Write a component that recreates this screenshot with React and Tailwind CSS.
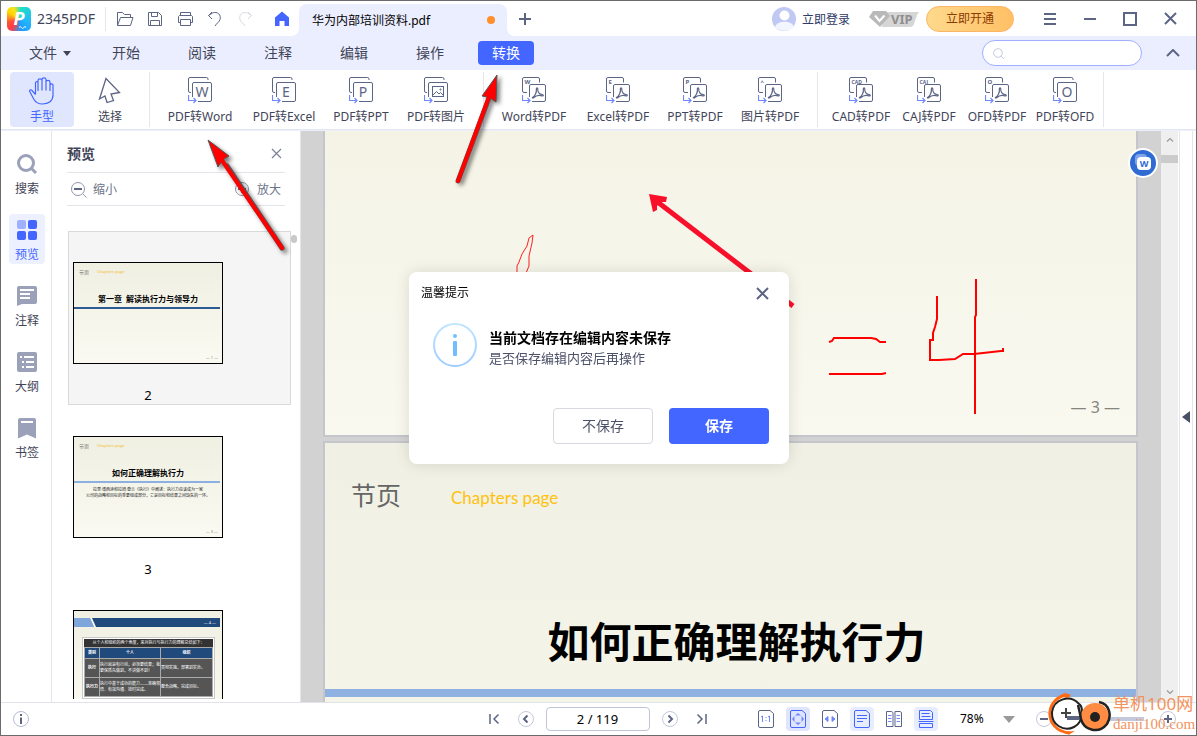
import React from 'react';

const menus = ['开始', '阅读', '注释', '编辑', '操作'];

const toolGroups = [
    [
        { label: 'PDF转Word', letter: 'W', width: 'w-[84px]' },
        { label: 'PDF转Excel', letter: 'E', width: 'w-[84px]' },
        { label: 'PDF转PPT', letter: 'P', width: 'w-[70px]' },
        { label: 'PDF转图片', picture: true, width: 'w-[80px]' },
    ],
    [
        { label: 'Word转PDF', badge: 'W', width: 'w-[84px]' },
        { label: 'Excel转PDF', badge: 'E', width: 'w-[84px]' },
        { label: 'PPT转PDF', badge: 'P', width: 'w-[70px]' },
        { label: '图片转PDF', badge: '^', width: 'w-[80px]' },
    ],
    [
        { label: 'CAD转PDF', badge: 'CAD', width: 'w-[68px]' },
        { label: 'CAJ转PDF', badge: 'CAJ', width: 'w-[68px]' },
        { label: 'OFD转PDF', badge: 'O', width: 'w-[68px]' },
        { label: 'PDF转OFD', letter: 'O', width: 'w-[68px]' },
    ],
];

const Svg = ({ w, h, className = '', children }) => (
    <svg width={w} height={h} viewBox={`0 0 ${w} ${h}`} fill="none" stroke="currentColor" className={`shrink-0 ${className}`} aria-hidden="true">
        {children}
    </svg>
);

const Cross = ({ size, stroke }) => (
    <Svg w={size} h={size}>
        <path d={`M1 1L${size - 1} ${size - 1}M${size - 1} 1L1 ${size - 1}`} strokeWidth={stroke} />
    </Svg>
);

/* Two stacked sheets with the blue "convert" arrow */
const ConvertIcon = ({ letter, badge, picture }) => (
    <Svg w={25} h={28} className="text-[#5d6585]">
        {badge ? (
            <>
                <path d="M5 15.5H2a1.5 1.5 0 0 1-1.500-1.500V2A1.500 1.500 0 0 1 2 .5h14A1.500 1.500 0 0 1 17.500 2v3.500" />
                <path d="M10 24.500h12a1.500 1.500 0 0 0 1.500-1.500V9A1.500 1.500 0 0 0 22 7.500H9A1.500 1.500 0 0 0 7.500 9v11" />
                <path d="M10.500 20.500c2.500-1.200 4.300-5 3.900-8.700-.1-1.300 1.400-1.300 1.300 0-.2 3.200 1.700 5.700 4.600 5.700 1.400.1 1.300 1.700 0 1.400-3-1-6.800 0-8.700 1.800-.6.600-1.600.3-1.100-.2z" strokeWidth="1.200" />
                <text x="2.500" y="6.500" fontSize={badge.length > 1 ? 5 : 6} fontWeight="700" fill="currentColor" stroke="none">{badge}</text>
            </>
        ) : (
            <>
                <path d="M3 15.500H2A1.500 1.500 0 0 1 .5 14V2A1.500 1.500 0 0 1 2 .5h16.500A1.500 1.500 0 0 1 20 2v1" />
                <path d="M10 24.500h12a1.500 1.500 0 0 0 1.500-1.500V7A1.500 1.500 0 0 0 22 5.500H6A1.500 1.500 0 0 0 4.500 7v13" />
                {picture ? (
                    <>
                        <rect x="8.500" y="9.500" width="11" height="10" />
                        <path d="M9 18l3.500-3.500 2.500 2.500 1.500-1.500 3 3" />
                        <circle cx="16.500" cy="12.500" r=".6" />
                    </>
                ) : (
                    <text x="14" y="20" fontSize="14" textAnchor="middle" fill="currentColor" stroke="none">{letter}</text>
                )}
            </>
        )}
        <path d="M.5 18v5.500h7M5.500 21l2.500 2.500L5.500 26" className="text-[#6f87ff]" strokeWidth="1.200" />
    </Svg>
);

const ToolButton = ({ label, width, active, children }) => (
    <button className={`${width} h-[55px] shrink-0 pt-[5px] rounded flex flex-col items-center text-xs leading-4 ${active ? 'bg-[#e1e6ff] text-[#4266ff]' : 'text-[#3f4558]'}`}>
        <span className="h-8 flex items-start justify-center">{children}</span>
        {label}
    </button>
);

const Divider = ({ className = '' }) => <span className={`w-px h-[55px] shrink-0 bg-[#e6e7ec] ${className}`}></span>;

const TitleBar = () => (
    <header className="h-[35px] shrink-0 flex items-center bg-white pl-1.5 pr-1.5 text-[#5d6585]">
        <span className="relative w-6 h-6 rounded-[5px] flex justify-center bg-[conic-gradient(from_10deg,#1fe0c4,#22b4ff_28%,#1d9bff_45%,#ff3b45_58%,#ff5533_68%,#ffd800_82%,#f7e21a_90%,#1fe0c4)]">
            <span className="text-white font-bold italic text-lg leading-[22px]">P</span>
            <svg width="24" height="24" viewBox="0 0 24 24" fill="none" stroke="#fff" className="absolute inset-0" aria-hidden="true">
                <path d="M12 20.500q1.200-2 2.400 0t2.400 0 2.400 0" />
            </svg>
        </span>
        <span className="w-[68px] ml-1.5 text-sm text-[#3f4558]">2345PDF</span>
        <span className="w-px h-6 bg-[#e6e7ec] mr-1"></span>
        <button className="w-[30px] flex justify-center" aria-label="打开">
            <Svg w={18} h={16}>
                <path d="M1.500 14.500v-13h5l2 2h6v3M1.500 14.500l3-8h12.500l-2.500 8z" strokeLinejoin="round" />
            </Svg>
        </button>
        <button className="w-[30px] flex justify-center" aria-label="保存文档">
            <Svg w={16} h={16}>
                <path d="M1.500 1.500h10l3 3v10h-13zM4.500 1.500v4h6v-4M3.500 14.500v-5h9v5" strokeLinejoin="round" />
            </Svg>
        </button>
        <button className="w-[30px] flex justify-center" aria-label="打印">
            <Svg w={17} h={16}>
                <path d="M3.500 4.500v-3h10v3M3.500 11.500h-2v-6l1-1h12l1 1v6h-2M3.500 8.500h10v6h-10z" strokeLinejoin="round" />
            </Svg>
        </button>
        <button className="w-[30px] flex justify-center" aria-label="撤销">
            <Svg w={16} h={16}>
                <path d="M5 1L1.500 4.500 5 8M1.500 4.500l4-2.500c5-2 9 2 7.500 6.500-.8 2.500-3.500 4-5 6.500" />
            </Svg>
        </button>
        <button className="w-[30px] flex justify-center text-[#d8dae2]" aria-label="重做">
            <Svg w={16} h={16}>
                <path d="M11 1l3.500 3.500L11 8M14.500 4.500l-4-2.500c-5-2-9 2-7.500 6.500.8 2.500 3.500 4 5 6.500" />
            </Svg>
        </button>
        <button className="w-7 ml-2 flex justify-center text-[#4266ff]" aria-label="主页">
            <Svg w={16} h={16}>
                <path d="M8 .5L1 6.500v8.500h4.500v-5h5v5H15V6.500z" fill="currentColor" stroke="none" />
            </Svg>
        </button>
        <div className="relative self-end ml-[3px] w-52 h-8 rounded-t-lg bg-[#ebeeff] flex items-center justify-between pl-[13px] pr-3 text-xs text-black before:absolute before:w-2 before:h-2 before:bottom-0 before:-left-2 before:bg-[radial-gradient(circle_at_0_0,transparent_8px,#ebeeff_8px)] after:absolute after:w-2 after:h-2 after:bottom-0 after:-right-2 after:bg-[radial-gradient(circle_at_100%_0,transparent_8px,#ebeeff_8px)]">
            <span className="pt-0.5">华为内部培训资料.pdf</span>
            <span className="w-2 h-2 rounded-full bg-[#ff8f2b]"></span>
        </div>
        <button className="w-9 flex justify-center" aria-label="新建标签">
            <Svg w={12} h={12}>
                <path d="M6 0v12M0 6h12" strokeWidth="2" />
            </Svg>
        </button>

        <button className="ml-auto flex items-center text-xs text-[#2f3a66]">
            <Svg w={24} h={24} className="mr-1.5">
                <circle cx="12" cy="12" r="12" fill="#c0c8f4" stroke="none" />
                <circle cx="12.500" cy="8.500" r="5" fill="#fff" stroke="none" />
                <path d="M3 20c2-7 17-7 19 0-4 5-14 5-19 0z" fill="#f3f5ff" stroke="none" />
            </Svg>
            <span className="pt-0.5">立即登录</span>
        </button>
        <span className="relative w-[50px] h-4 ml-[19px]">
            <svg width="50" height="16" viewBox="0 0 50 16" aria-hidden="true">
                <path d="M15 1h35l-2 3-3 9q-1 3-4 3H13z" fill="#d6d6d6" />
                <path d="M4 0h13l4 5-10 11L0 6z" fill="#b9b9b9" />
                <path d="M6 4.500l4.500 5.500 5-5.500" fill="none" stroke="#fff" strokeWidth="2" />
            </svg>
            <b className="absolute left-[22px] top-0 text-[13px] leading-4 text-[#8f8f8f]">VIP</b>
        </span>
        <button className="w-[88px] h-[26px] ml-[7px] mr-4 rounded-full border border-[#fcb562] bg-gradient-to-r from-[#ffd98c] to-[#ffc065] text-xs text-[#8b3a00]">立即开通</button>
        <button className="w-10 flex justify-center" aria-label="菜单">
            <Svg w={12} h={12}>
                <path d="M0 1h12M0 6h12M0 11h12" strokeWidth="2" />
            </Svg>
        </button>
        <button className="w-10 flex justify-center" aria-label="最小化">
            <Svg w={12} h={12}>
                <path d="M0 6h12" strokeWidth="2" />
            </Svg>
        </button>
        <button className="w-10 flex justify-center" aria-label="最大化">
            <Svg w={14} h={14}>
                <rect x="1" y="1" width="12" height="12" strokeWidth="2" />
            </Svg>
        </button>
        <button className="w-10 flex justify-center" aria-label="关闭">
            <Cross size={13} stroke={2} />
        </button>
    </header>
);

const MenuBar = () => (
    <nav className="h-[34px] shrink-0 bg-[#ebeeff] flex items-center gap-5 pl-[21px] pr-4 text-sm text-[#3f4558]">
        <button className="w-14 flex items-center justify-center gap-1.5">
            文件
            <Svg w={8} h={5}>
                <path d="M0 0h8L4 5z" fill="currentColor" stroke="none" />
            </Svg>
        </button>
        {menus.map((name) => (
            <button key={name} className="w-14">{name}</button>
        ))}
        <button className="w-14 h-6 rounded bg-[#4266ff] text-white leading-6">转换</button>
        <label className="ml-auto w-40 h-[26px] rounded-full border border-[#9fafff] bg-white flex items-center px-2.5 text-[#c3cbe0]">
            <Svg w={11} h={11}>
                <circle cx="5" cy="5" r="4.300" />
                <path d="M8 8l3 3" />
            </Svg>
            <input type="text" aria-label="搜索功能" className="w-full min-w-0 ml-1 outline-none bg-transparent text-xs text-[#3f4558]" />
        </label>
        <button className="w-[18px] flex justify-end text-[#5d6585]" aria-label="收起工具栏">
            <Svg w={14} h={8}>
                <path d="M1 7l6-6 6 6" strokeWidth="2" />
            </Svg>
        </button>
    </nav>
);

const ToolBar = () => (
    <div className="h-[60px] shrink-0 bg-white border-b border-[#e3e5ef] flex items-start pt-0.5 pl-[9px] overflow-hidden">
        <ToolButton label="手型" width="w-16" active>
            <Svg w={26} h={28}>
                <path d="M6.500 17.500L3 13.500c-1.500-1.800-3 0-2 1.500l4 7.500c2 3.500 5 4.500 8.500 4.500 6 0 10.500-3 10.500-9V8.500c0-2.200-3-2.200-3 0V14M21 9V5c0-2.200-4-2.200-4 0v8.500M17 5V2.500c0-2.200-4-2.200-4 0v11M13 3.500c0-2.200-4-2.200-4 0V14M9 5c-1.500-1-2.800 0-2.500 2v10.500" strokeWidth="1.200" />
            </Svg>
        </ToolButton>
        <ToolButton label="选择" width="w-16 ml-1">
            <Svg w={24} h={28} className="text-[#5d6585]">
                <path d="M8 1.500L1.500 22l5.500-3 2 6.500 6.500-2-2.500-6.500 8.500-1.500z" strokeWidth="1.300" />
            </Svg>
        </ToolButton>
        <Divider className="ml-[7px] mr-2" />
        {toolGroups.map((group, i) => (
            <React.Fragment key={i}>
                {i > 0 && <Divider className={i === 1 ? 'ml-[7px] mr-2' : 'ml-[7px] mr-[9px]'} />}
                {group.map((tool) => (
                    <ToolButton key={tool.label} label={tool.label} width={tool.width}>
                        <ConvertIcon {...tool} />
                    </ToolButton>
                ))}
            </React.Fragment>
        ))}
        <Divider className="ml-1" />
    </div>
);

const railItems = [
    {
        label: '搜索',
        icon: (
            <>
                <circle cx="9" cy="9" r="7.500" strokeWidth="3" />
                <path d="M14 14l5 5" strokeWidth="3" />
            </>
        ),
    },
    {
        label: '预览',
        active: true,
        icon: (
            <g stroke="none" fill="#4266ff">
                <rect width="9" height="9" rx="2" fill="#9fb0ff" />
                <rect x="11" width="9" height="9" rx="2" />
                <rect y="11" width="9" height="9" rx="2" />
                <rect x="11" y="11" width="9" height="9" rx="2" />
            </g>
        ),
    },
    {
        label: '注释',
        icon: (
            <>
                <path d="M2 0h16q2 0 2 2v14q0 2-2 2H5l-5 2V2q0-2 2-2z" fill="currentColor" stroke="none" />
                <path d="M3 4h14M3 8h10M3 12h10" stroke="#fff" strokeWidth="2" />
            </>
        ),
    },
    {
        label: '大纲',
        icon: (
            <>
                <rect width="20" height="20" rx="2" fill="currentColor" stroke="none" />
                <path d="M3 5h2M7 5h10M5 10h2M9 10h8M5 15h2M9 15h8" stroke="#fff" strokeWidth="2" />
            </>
        ),
    },
    {
        label: '书签',
        icon: (
            <>
                <path d="M3 0h14q2 0 2 2v18.500l-9-4-9 4V2q0-2 2-2z" fill="currentColor" stroke="none" />
                <path d="M4 4h12" stroke="#fff" strokeWidth="2" />
            </>
        ),
    },
];

const SideRail = () => (
    <aside className="w-[51px] shrink-0 bg-white border-r border-[#e4e5ea] pt-[17px] pl-0.5 flex flex-col items-center gap-4">
        {railItems.map((item) => (
            <button key={item.label} className={`w-9 h-[50px] pt-1.5 rounded flex flex-col items-center gap-[7px] text-xs leading-4 ${item.active ? 'bg-[#edf0ff] text-[#4266ff]' : 'text-[#3f4558]'}`}>
                <Svg w={20} h={20} className={item.active ? '' : 'text-[#9aa1b8] overflow-visible'}>{item.icon}</Svg>
                {item.label}
            </button>
        ))}
    </aside>
);

const Thumb = ({ number, selected, children }) => (
    <li className={`h-[174px] shrink-0 pl-1 pt-[30px] border ${selected ? 'bg-[#f5f5f5] border-[#d9d9d9]' : 'border-transparent'}`}>
        <div className="w-[150px] h-[102px] border border-black bg-gradient-to-b from-[#efefe2] to-[#fafaf2] overflow-hidden">{children}</div>
        {number && <p className="w-[150px] pt-[21px] text-center text-[13px] leading-5 text-black">{number}</p>}
    </li>
);

const ThumbHead = () => (
    <div className="pl-[5px] pt-1.5 flex items-center gap-2 leading-[6px]">
        <span className="text-[5px] text-[#666]">节页</span>
        <span className="text-[4px] text-[#f5bb2b]">Chapters page</span>
    </div>
);

const PreviewPanel = () => (
    <section className="w-[249px] shrink-0 bg-white border-r border-[#e4e5ea] pb-[3px] flex flex-col text-[#3f4558]">
        <div className="mx-[15px]">
            <div className="h-[42px] pt-1 pr-[3px] flex items-center justify-between border-b border-[#e4e5ea]">
                <h2 className="text-sm font-bold">预览</h2>
                <button className="text-[#7b8298]" aria-label="关闭预览">
                    <Cross size={11} stroke={1.200} />
                </button>
            </div>
            <div className="h-[33px] pl-1 pr-1 pt-0.5 flex items-center justify-between border-b border-[#e4e5ea] text-xs text-[#6d7389]">
                <button className="flex items-center gap-1.5">
                    <Svg w={16} h={16} className="text-[#8f96aa]">
                        <circle cx="7" cy="7" r="6.500" />
                        <path d="M12 12l3.500 3.500" />
                        <path d="M3 7h8" stroke="#5d6585" strokeWidth="2" />
                    </Svg>
                    缩小
                </button>
                <button className="flex items-center gap-1.5">
                    <Svg w={16} h={16} className="text-[#8f96aa]">
                        <circle cx="7" cy="7" r="6.500" />
                        <path d="M12 12l3.500 3.500" />
                        <path d="M3 7h8M7 3v8" stroke="#5d6585" strokeWidth="2" />
                    </Svg>
                    放大
                </button>
            </div>
        </div>
        <div className="flex-1 min-h-0 mt-[25px] pl-4 flex">
            <ul className="w-[223px] overflow-hidden flex flex-col">
                <Thumb number="2" selected>
                    <ThumbHead />
                    <h3 className="pt-[17px] h-8 text-center text-[8px] leading-[14px] font-bold text-black whitespace-pre">第一章  解读执行力与领导力</h3>
                    <div className="mr-0.5 h-0.5 bg-[#2f5a93]"></div>
                    <p className="pt-[46px] pr-1 text-right text-[4px] leading-[6px] text-[#888]">— 1 —</p>
                </Thumb>
                <Thumb number="3">
                    <ThumbHead />
                    <h3 className="pt-[17px] h-8 text-center text-[8px] leading-[14px] font-bold text-black">如何正确理解执行力</h3>
                    <div className="mr-0.5 h-0.5 bg-[#8db0e2]"></div>
                    <p className="pt-1 text-center text-[4px] leading-[6px] text-[#222]">
                        拉里·博西迪和拉姆·查兰《执行》中阐述：执行力应该成为一家
                        <br />
                        公司的战略和目标的重要组成部分，它是目标和结果之间缺失的一环。
                    </p>
                    <p className="pt-[30px] pr-1 text-right text-[4px] leading-[6px] text-[#888]">— 3 —</p>
                </Thumb>
                <Thumb>
                    <div className="mt-[7px] mr-0.5 h-[9px] flex bg-[#20497c]">
                        <svg width="22" height="9" viewBox="0 0 22 9" aria-hidden="true">
                            <path d="M0 0h16l4 9H0z" fill="#7fa6da" />
                            <path d="M16 0h2l4 9h-2z" fill="#fff" />
                        </svg>
                        <span className="ml-auto pr-1 text-[4px] leading-[9px] text-white">— 4 —</span>
                    </div>
                    <div className="mt-2.5 ml-2 mr-[7px] p-px border border-[#c9c9c9] bg-white">
                        <table className="w-full table-fixed bg-[#555] text-[4px] leading-[6px] text-white">
                            <caption className="h-2 bg-[#333] text-[4px] leading-[8px] text-white">从个人和组织的两个角度，来对执行与执行力的理解总结如下：</caption>
                            <thead>
                                <tr className="h-[11px] bg-[#20497c]">
                                    <th className="w-[15px] border border-[#aaa]">类别</th>
                                    <th className="border border-[#aaa]">个人</th>
                                    <th className="w-[52px] border border-[#aaa]">组织</th>
                                </tr>
                            </thead>
                            <tbody>
                                <tr className="h-[19px]">
                                    <th className="border border-[#aaa]">执行</th>
                                    <td className="border border-[#aaa]">执行就是有行动，必须要结果；我要保质先做到，不讲做不到！</td>
                                    <td className="border border-[#aaa]">贯彻实施，部署到实处。</td>
                                </tr>
                                <tr className="h-[19px]">
                                    <th className="border border-[#aaa]">执行力</th>
                                    <td className="border border-[#aaa]">执行中基于成功的能力——准确领悟、有效沟通、按时完成。</td>
                                    <td className="border border-[#aaa]">整合战略，完成目标。</td>
                                </tr>
                            </tbody>
                        </table>
                    </div>
                </Thumb>
            </ul>
            <span className="w-1.5 h-2 mt-1 rounded-full bg-[#c9c9c9]"></span>
        </div>
    </section>
);

/* Freehand red marks drawn by the user on page 3 */
const PageMarks = () => (
    <svg width="813" height="304" viewBox="0 0 813 304" fill="none" className="absolute left-0 top-0" aria-hidden="true">
        <path d="M192 142v-7l2-4 3-8 5-8 2-8 4-3-1 8-3 13v10l-3 7" stroke="#ff2020" />
        <path d="M330 69l138 106" stroke="#f8102a" strokeWidth="5" />
        <path d="M324 63l18 3-1 5-6 0-3 4 0 4-4 2z" fill="#f8102a" />
        <g stroke="#ff0000" strokeWidth="2">
            <path d="M504 211l3-1 2-3h37l5 1 4 3h6M504 243h53l4-1" />
            <path d="M612 165v23l-2 8-2 6v7h-3v20h9l16-1 8-5h11l27-3h2v-3" />
            <path d="M651 148v36l-1 2v97" />
        </g>
    </svg>
);

const Document = () => (
    <main className="relative flex-1 min-w-0 bg-[#d2d2d2] pl-[22px] pr-[23px] flex flex-col gap-1 overflow-hidden">
        <article className="relative h-[306px] shrink-0 border-2 border-t-0 border-[#c5c6cb] bg-gradient-to-b from-[#f4f3e6] to-[#faf9f0] overflow-hidden flex flex-col justify-end items-end">
            <PageMarks />
            <p className="pr-4 pb-4 text-base leading-6 text-[#85857d]">— 3 —</p>
        </article>
        <article className="flex-1 min-h-0 border-2 border-b-0 border-[#c5c6cb] bg-gradient-to-b from-[#f0f0e4] to-[#f4f4e8] overflow-hidden">
            <div className="pl-[26px] pt-[31px] flex items-center gap-[50px] leading-9">
                <span className="text-[25px] text-[#666]">节页</span>
                <span className="pt-1.5 font-['Lato'] text-[17px] text-[#ffc20e]">Chapters page</span>
            </div>
            <h1 className="pt-24 pl-3 text-center text-[42px] leading-[60px] font-bold text-black">如何正确理解执行力</h1>
            <div className="mt-[17px] h-2 bg-[#8fb1e2]"></div>
        </article>
        <button className="absolute right-[3px] top-[17px] w-[30px] h-[30px] rounded-full border-2 border-white bg-[#2f6bd3] flex items-center justify-center" aria-label="转Word">
            <Svg w={18} h={18}>
                <rect x="1" y="0" width="12" height="12" rx="4" fill="#7fa4ea" stroke="none" />
                <rect x="3" y="3" width="14" height="13" rx="4" fill="#fff" stroke="none" />
                <text x="10" y="13" fontSize="9" fontWeight="700" textAnchor="middle" fill="#2f6bd3" stroke="none">W</text>
            </Svg>
        </button>
    </main>
);

const ScrollBar = () => (
    <div className="w-[17px] shrink-0 bg-[#efefef] flex flex-col items-center text-[#9a9a9a]">
        <span className="h-6 pt-1.5">
            <Svg w={8} h={5}>
                <path d="M1 4.500l3-3 3 3" strokeWidth="1.200" />
            </Svg>
        </span>
        <span className="w-full h-2 bg-[#cbcbcb]"></span>
        <span className="mt-auto h-5 flex items-center">
            <Svg w={8} h={5}>
                <path d="M1 .5l3 3 3-3" strokeWidth="1.200" />
            </Svg>
        </span>
    </div>
);

const SideHandle = () => (
    <div className="w-[18px] shrink-0 bg-white flex">
        <button className="ml-px w-3.5 border-l border-r border-[#e4e5ea] flex items-center justify-center" aria-label="展开侧栏">
            <Svg w={8} h={12} className="text-[#4a5068]">
                <path d="M8 0v12L0 6z" fill="currentColor" stroke="none" />
            </Svg>
        </button>
    </div>
);

const viewModes = [
    { label: '实际大小', art: <path d="M4.500 6v6M3 7l1.500-1M11.500 6v6M10 7l1.500-1M8 7v1M8 10v1" className="text-[#6f87ff]" /> },
    { label: '适合页面', on: 'bg-[#dfe4ff]', art: <path d="M8 3l3 2.500H5zM8 15l3-2.500H5zM2 9l2.500-3v6zM14 9l-2.500-3v6z" fill="#6f87ff" stroke="none" /> },
    { label: '适合宽度', art: <path d="M3 9l3-2.500v5zM13 9l-3-2.500v5z" fill="#6f87ff" className="text-[#6f87ff]" /> },
    { label: '单页', on: 'bg-[#e8ecff]', art: <path d="M3 5.500h10M3 8.500h10M3 11.500h6" /> },
    { label: '双页', twin: true },
    { label: '连续', on: 'bg-[#e8ecff]', split: true },
];

const ViewButton = ({ mode }) => (
    <button className={`w-6 h-6 rounded flex items-center justify-center ${mode.on ? mode.on + ' text-[#4266ff]' : 'text-[#5d6585]'}`} aria-label={mode.label}>
        <Svg w={16} h={18}>
            {mode.twin && (
                <>
                    <path d="M.5 1.500h5l1.500 1v14H.5zM15.500 2.500v14H9v-15h5z" />
                    <path d="M2 5.500h3.500M2 8.500h3.500M2 11.500h3.500M10.500 5.500H14M10.500 8.500H14M10.500 11.500H14" className="text-[#6f87ff]" />
                </>
            )}
            {mode.split && <path d="M1.500.5h11l2 2v7h-13zM3.500 3.500h8M3.500 6.500h9M.5 11.500h15M1.500 13.500h13v4h-13z" />}
            {!mode.twin && !mode.split && <path d="M2 .5h10l3.500 3v12.500a1.500 1.500 0 0 1-1.500 1.500H2A1.500 1.500 0 0 1 .5 16V2A1.500 1.500 0 0 1 2 .5z" />}
            {mode.art}
        </Svg>
    </button>
);

const RoundButton = ({ label, d }) => (
    <button aria-label={label}>
        <Svg w={16} h={16}>
            <circle cx="8" cy="8" r="7.500" stroke="#c3c8dc" fill="#fff" />
            <path d={d} strokeWidth="2" />
        </Svg>
    </button>
);

const StatusBar = () => (
    <footer className="h-[33px] shrink-0 bg-white border-t border-[#e2e3e8] grid grid-cols-[1fr_auto_1fr] items-center text-[#5d6585]">
        <button className="pl-3 justify-self-start" aria-label="文档信息">
            <Svg w={16} h={16}>
                <circle cx="8" cy="8" r="7.500" stroke="#b4bbd6" />
                <path d="M8 3v2M8 6.500V13" strokeWidth="2" />
            </Svg>
        </button>
        <div className="flex items-center pr-0.5">
            <button aria-label="首页">
                <Svg w={11} h={12}>
                    <path d="M1 1v10M9.500 1.500L5 6l4.500 4.500" strokeWidth="1.500" />
                </Svg>
            </button>
            <span className="ml-[18px] mr-3 flex"><RoundButton label="上一页" d="M9.500 4.500L6 8l3.500 3.500" /></span>
            <input type="text" defaultValue="2 / 119" aria-label="页码" className="w-[104px] h-6 rounded-sm border border-[#bfc4d8] text-center text-[13px] text-black" />
            <span className="ml-3 mr-[18px] flex"><RoundButton label="下一页" d="M6.500 4.500L10 8l-3.500 3.500" /></span>
            <button aria-label="末页">
                <Svg w={11} h={12}>
                    <path d="M10 1v10M1.500 1.500L6 6l-4.500 4.500" strokeWidth="1.500" />
                </Svg>
            </button>
        </div>
        <div className="justify-self-end pr-5 flex items-center">
            <div className="flex gap-2">
                {viewModes.map((mode) => <ViewButton key={mode.label} mode={mode} />)}
            </div>
            <button className="ml-[22px] w-[55px] mr-[21px] flex items-center justify-between text-xs text-black">
                78%
                <Svg w={12} h={7} className="text-[#9a9a9a]">
                    <path d="M0 0h12L6 7z" fill="currentColor" stroke="none" />
                </Svg>
            </button>
            <RoundButton label="缩小页面" d="M4 8h8" />
            <span className="w-[108px] flex items-center">
                <span className="ml-3 w-10 h-1 bg-[#5d6585]"></span>
                <span className="w-10 h-1 bg-[#c3c8dc]"></span>
            </span>
            <RoundButton label="放大页面" d="M4 8h8M8 4v8" />
        </div>
    </footer>
);

const SaveDialog = () => (
    <div className="fixed inset-0 flex items-center justify-center pointer-events-none">
        <div role="dialog" aria-labelledby="save-title" className="pointer-events-auto ml-px w-[380px] h-48 rounded-lg bg-white shadow-[0_0_16px_rgba(0,0,0,0.12)] pl-3 pr-5 pb-5 flex flex-col">
            <div className="h-[42px] flex items-center justify-between">
                <h2 id="save-title" className="text-xs text-black">温馨提示</h2>
                <button className="text-[#5d6585]" aria-label="关闭">
                    <Cross size={13} stroke={2} />
                </button>
            </div>
            <div className="pl-3 pt-[9px] flex gap-3">
                <svg width="44" height="44" viewBox="0 0 44 44" fill="none" aria-hidden="true">
                    <defs>
                        <linearGradient id="info" x1="0" y1="0" x2="0" y2="44" gradientUnits="userSpaceOnUse">
                            <stop stopColor="#c2e6ff" />
                            <stop offset="1" stopColor="#9ccbff" />
                        </linearGradient>
                    </defs>
                    <circle cx="22" cy="22" r="21" stroke="url(#info)" strokeWidth="2" />
                    <circle cx="22" cy="13" r="2" fill="#72c1ff" />
                    <rect x="20" y="18" width="4" height="15" rx="1" fill="#72bcff" />
                </svg>
                <div className="pt-[5px]">
                    <p className="text-sm leading-5 font-bold text-black">当前文档存在编辑内容未保存</p>
                    <p className="text-[13px] leading-5 text-[#4b5168]">是否保存编辑内容后再操作</p>
                </div>
            </div>
            <div className="mt-auto flex justify-end gap-4 text-sm">
                <button className="w-[100px] h-9 rounded border border-[#d7d9e0] text-[#4b5168]">不保存</button>
                <button className="w-[100px] h-9 rounded bg-[#4266ff] font-bold text-white">保存</button>
            </div>
        </div>
    </div>
);

/* Red pointers laid over the window */
const Pointers = () => (
    <>
        <svg width="100" height="130" viewBox="0 0 100 130" className="absolute left-[199px] top-[132px] pointer-events-none drop-shadow-[3px_3px_2px_rgba(0,0,0,0.5)]" aria-hidden="true">
            <path d="M27 33L82 115" stroke="#555" strokeWidth="5" strokeLinecap="round" />
            <path d="M8 7l21 16-5 3-2 2-4 6z" fill="#ff0000" stroke="#555" />
            <path d="M19 23L82 115" stroke="#ff0000" strokeWidth="4" strokeLinecap="round" />
        </svg>
        <svg width="70" height="125" viewBox="0 0 70 125" className="absolute left-[446px] top-[67px] pointer-events-none drop-shadow-[3px_2px_2px_rgba(0,0,0,0.5)]" aria-hidden="true">
            <path d="M42 30L11 113" stroke="#555" strokeWidth="5" strokeLinecap="round" />
            <path d="M50 7l-15 21 5 1 3 1 6 4z" fill="#ff0000" stroke="#555" />
            <path d="M43 26L11 113" stroke="#ff0000" strokeWidth="4" strokeLinecap="round" />
        </svg>
    </>
);

const SiteMark = () => (
    <div className="absolute right-0 bottom-0 flex items-center gap-px pointer-events-none text-[#f3925c]">
        <svg width="64" height="42" viewBox="0 0 64 42" fill="none" aria-hidden="true">
            <path d="M22 3c-8-3-19 5-20 16-1 10 6 20 20 21" stroke="#ff6a13" strokeWidth="3" />
            <path d="M12 3q5-5 9-1l-2 3zM22 41q-5 1-6-2l11-1z" fill="#ff6a13" />
            <circle cx="18" cy="21" r="15" fill="#fff" />
            <path d="M31 11C22 1 6 6 4 19c-1 13 12 20 22 15 6-3 8-9 8-15 0-5-1-7-3-8" stroke="#222" strokeWidth="2" />
            <path d="M13 20h10M18 15v10" stroke="#444" strokeWidth="2" />
            <path d="M19 25h14" stroke="#5d6585" strokeWidth="4" />
            <circle cx="47" cy="24" r="14" fill="#ff8c42" />
            <path d="M30 12q2 8 3 14c3 12 18 15 26 5 5-8 3-20-8-22" stroke="#222" strokeWidth="2.500" />
            <circle cx="47" cy="24" r="5" fill="#222" />
        </svg>
        <p className="w-[83px]">
            <span className="block text-[17px] leading-5">单机100网</span>
            <span className="block font-['Liberation_Serif'] text-[15px] leading-5">danji100.com</span>
        </p>
    </div>
);

const App = () => {
    return (
        <div className="relative h-screen min-h-[480px] overflow-hidden flex flex-col border border-[#6b6b6b] bg-[#edf0fc] font-['Noto_Sans','Noto_Sans_CJK_SC',sans-serif]">
            <TitleBar />
            <MenuBar />
            <ToolBar />
            <div className="flex-1 min-h-0 mt-px flex">
                <SideRail />
                <PreviewPanel />
                <Document />
                <ScrollBar />
                <SideHandle />
            </div>
            <StatusBar />
            <Pointers />
            <SiteMark />
            <SaveDialog />
        </div>
    );
};

export default App;
